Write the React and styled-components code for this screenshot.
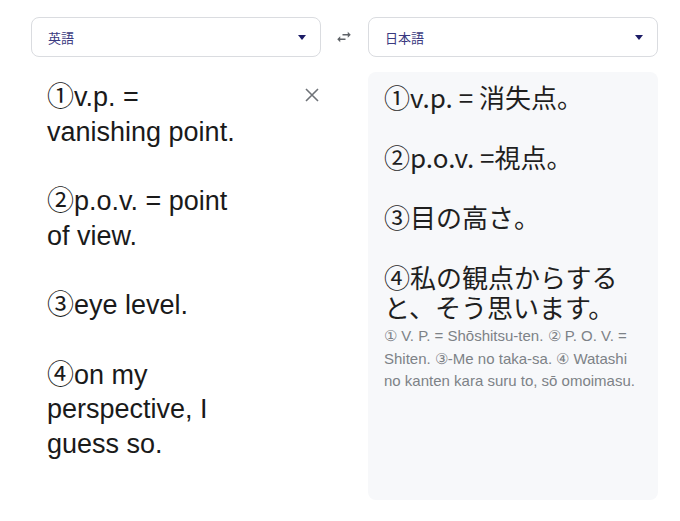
import React from "react";
import styled, { createGlobalStyle } from "styled-components";

const Global = createGlobalStyle`
  html, body { margin: 0; padding: 0; background: #ffffff; }
  body { font-family: "Liberation Sans", "Noto Sans CJK JP", sans-serif; }
  * { box-sizing: border-box; }
`;

const Page = styled.div`
  width: 680px;
  height: 521px;
  padding: 17px 0 0 31px;
  display: grid;
  grid-template-columns: 290px 47px 290px;
  grid-template-rows: 40px 428px;
  row-gap: 15px;
`;

const Select = styled.div`
  display: flex;
  align-items: center;
  justify-content: space-between;
  padding: 0 14px 0 16px;
  border: 1px solid #dadce0;
  border-radius: 8px;
  background: #fff;
`;

const SelectLabel = styled.span`
  font-family: "Noto Sans CJK JP", sans-serif;
  font-size: 13px;
  color: #3a3a80;
`;

const Caret = styled.span`
  width: 0;
  height: 0;
  border-left: 4.5px solid transparent;
  border-right: 4.5px solid transparent;
  border-top: 5px solid #1c1c66;
`;

const SwapCell = styled.div`
  display: flex;
  align-items: center;
  justify-content: center;
  padding-right: 2px;
`;

const SourcePane = styled.div`
  display: flex;
  justify-content: space-between;
  align-items: flex-start;
  padding: 8px 0 0 16px;
`;

const SourceText = styled.div`
  width: 200px;
  font-family: "Liberation Sans", "Noto Sans CJK JP", sans-serif;
  font-size: 27px;
  line-height: 34.7px;
  color: #1a1a1a;
  white-space: pre-wrap;
`;

const ClearButton = styled.button`
  width: 18px;
  height: 24px;
  margin-top: 3px;
  padding: 0;
  border: none;
  background: none;
  display: flex;
  align-items: center;
  justify-content: center;
`;

const TargetPane = styled.div`
  grid-column: 3;
  background: #f7f8fa;
  border-radius: 8px;
  padding: 10px 16px 0 16px;
`;

const TargetText = styled.div`
  font-family: "Noto Sans CJK JP", sans-serif;
  font-size: 26px;
  line-height: 30px;
  color: #1f1f1f;
  white-space: pre-wrap;
`;

const Romaji = styled.div`
  margin-top: 3px;
  font-family: "Liberation Sans", sans-serif;
  font-size: 15px;
  line-height: 22.5px;
  color: #7d8287;
`;

const SwapIcon = () => (
  <svg width="18" height="18" viewBox="0 0 24 24" fill="#5f6368">
    <path d="M6.99 11L3 15l3.99 4v-3H14v-2H6.99v-3zM21 9l-3.99-4v3H10v2h7.01v3L21 9z" />
  </svg>
);

const CloseIcon = () => (
  <svg width="14" height="14" viewBox="0 0 14 14" stroke="#6f7378" strokeWidth="1.6" fill="none">
    <path d="M1 1L13 13M13 1L1 13" />
  </svg>
);

export default function App() {
  return (
    <>
      <Global />
      <Page>
        <Select>
          <SelectLabel>英語</SelectLabel>
          <Caret />
        </Select>
        <SwapCell>
          <SwapIcon />
        </SwapCell>
        <Select>
          <SelectLabel>日本語</SelectLabel>
          <Caret />
        </Select>
        <SourcePane>
          <SourceText>
            {"①v.p. = vanishing point.\n\n②p.o.v. = point of view.\n\n③eye level.\n\n④on my perspective, I guess so."}
          </SourceText>
          <ClearButton aria-label="clear">
            <CloseIcon />
          </ClearButton>
        </SourcePane>
        <TargetPane>
          <TargetText>
            {"①v.p. = 消失点。\n\n②p.o.v. =視点。\n\n③目の高さ。\n\n④私の観点からすると、そう思います。"}
          </TargetText>
          <Romaji>
            ① V. P. = Shōshitsu-ten. ② P. O. V. = Shiten. ③-Me no taka-sa. ④ Watashi no kanten kara suru to, sō omoimasu.
          </Romaji>
        </TargetPane>
      </Page>
    </>
  );
}
